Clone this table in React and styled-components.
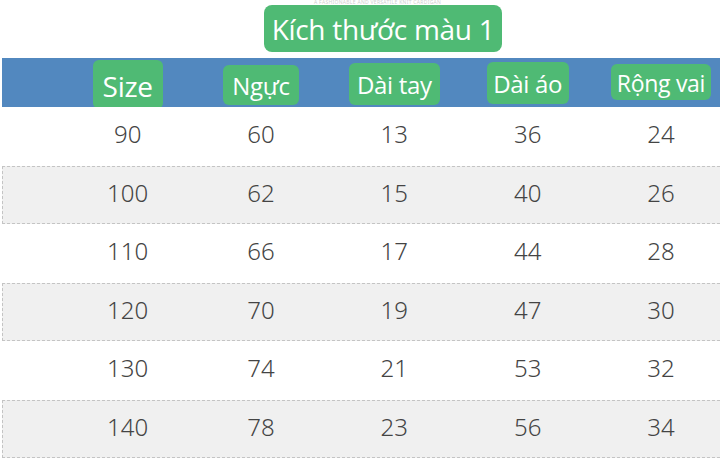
import React from "react";
import styled, { createGlobalStyle } from "styled-components";

const Global = createGlobalStyle`
  html, body { margin: 0; padding: 0; background: #ffffff; }
  #root { width: 720px; height: 458px; overflow: hidden; }
`;

const GREEN = "#4fba74";
const BLUE = "#5288bf";

const Page = styled.div`
  width: 720px;
  height: 458px;
  overflow: hidden;
  background: #ffffff;
  display: flex;
  flex-direction: column;
  font-family: "Noto Sans", "Open Sans", sans-serif;
`;

const TitleRow = styled.div`
  position: relative;
  height: 58px;
  display: flex;
  align-items: flex-start;
  padding: 5px 0 0 264px;
  box-sizing: border-box;
`;

const Tiny = styled.span`
  position: absolute;
  left: 314px;
  top: 0;
  font-size: 5px;
  line-height: 5px;
  letter-spacing: 0.3px;
  color: #cfcfcf;
  white-space: nowrap;
`;

const Title = styled.div`
  height: 47px;
  width: 238px;
  box-sizing: border-box;
  background: ${GREEN};
  border-radius: 8px;
  color: #ffffff;
  font-family: "Open Sans", "Noto Sans", sans-serif;
  font-size: 28px;
  display: flex;
  align-items: center;
  justify-content: center;
  padding-top: 1px;
  letter-spacing: -0.3px;
`;

const Columns = styled.div`
  display: grid;
  grid-template-columns: repeat(5, 133.33px);
  margin-left: 2px;
`;

const HeaderBand = styled(Columns)`
  height: 49px;
  background: ${BLUE};
  overflow: hidden;
  padding-left: 59px;
`;

const HeaderCell = styled.div`
  display: flex;
  justify-content: center;
  align-items: flex-start;
`;

const Badge = styled.div`
  margin-top: ${(p) => p.$top}px;
  height: ${(p) => p.$h}px;
  width: ${(p) => p.$w}px;
  box-sizing: border-box;
  background: ${GREEN};
  border-radius: 6px;
  color: #ffffff;
  font-family: "Open Sans", "Noto Sans", sans-serif;
  font-size: ${(p) => p.$fs}px;
  line-height: 1;
  display: flex;
  justify-content: center;
  align-items: flex-end;
  padding-bottom: ${(p) => p.$pb}px;
  white-space: nowrap;
  letter-spacing: -0.3px;
`;

const Row = styled(Columns)`
  height: 58.5px;
  box-sizing: border-box;
  background: ${(p) => (p.$alt ? "#f0f0f0" : "#ffffff")};
  border: 1px dashed ${(p) => (p.$alt ? "#c4c4c4" : "transparent")};
  border-right: none;
  padding-left: 58px;
`;

const Cell = styled.div`
  display: flex;
  align-items: center;
  justify-content: center;
  padding-bottom: 5px;
  font-size: 24px;
  font-weight: 300;
  color: #444444;
`;

const headers = [
  { t: "Size", top: 2, h: 49, w: 70, fs: 28, pb: 9 },
  { t: "Ngực", top: 7, h: 40, w: 76, fs: 24, pb: 7 },
  { t: "Dài tay", top: 5, h: 42, w: 91, fs: 24, pb: 8 },
  { t: "Dài áo", top: 4, h: 42, w: 82, fs: 24, pb: 8 },
  { t: "Rộng vai", top: 6, h: 36, w: 100, fs: 23, pb: 5 },
];

const rows = [
  [90, 60, 13, 36, 24],
  [100, 62, 15, 40, 26],
  [110, 66, 17, 44, 28],
  [120, 70, 19, 47, 30],
  [130, 74, 21, 53, 32],
  [140, 78, 23, 56, 34],
];

export default function App() {
  return (
    <>
      <Global />
      <Page>
        <TitleRow>
          <Tiny>A FASHIONABLE AND VERSATILE KNIT CARDIGAN</Tiny>
          <Title>Kích thước màu 1</Title>
        </TitleRow>
        <HeaderBand>
          {headers.map((h) => (
            <HeaderCell key={h.t}>
              <Badge $top={h.top} $h={h.h} $w={h.w} $fs={h.fs} $pb={h.pb}>
                {h.t}
              </Badge>
            </HeaderCell>
          ))}
        </HeaderBand>
        {rows.map((r, i) => (
          <Row key={r[0]} $alt={i % 2 === 1}>
            {r.map((v, j) => (
              <Cell key={j}>{v}</Cell>
            ))}
          </Row>
        ))}
      </Page>
    </>
  );
}
